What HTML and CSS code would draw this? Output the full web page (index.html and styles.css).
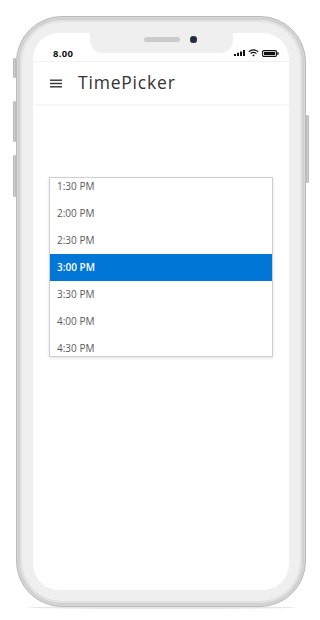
FILE: index.html
```html
<!DOCTYPE html>
<html>
<head>
<meta charset="utf-8">
<link rel="stylesheet" href="styles.css">
</head>
<body>
<div class="device">
  <span class="btn btn-l1"></span>
  <span class="btn btn-l2"></span>
  <span class="btn btn-l3"></span>
  <span class="btn btn-r1"></span>
  <div class="phone">
    <div class="bezel">
      <div class="screen">
        <div class="notch">
          <span class="speaker"></span>
          <span class="camera"></span>
        </div>
        <div class="status">
          <span class="clock">8.00</span>
          <span class="icons">
            <svg width="11" height="6" viewBox="0 0 11 6"><rect x="0" y="4" width="2" height="2" fill="#111"/><rect x="3" y="2.8" width="2" height="3.2" fill="#111"/><rect x="6" y="1.5" width="2" height="4.5" fill="#111"/><rect x="9" y="0" width="2" height="6" fill="#111"/></svg>
            <svg width="11" height="8" viewBox="0 0 11 8"><path d="M0.8 2.8 A6.5 6.5 0 0 1 10.2 2.8" fill="none" stroke="#111" stroke-width="1.2"/><path d="M2.6 4.6 A4 4 0 0 1 8.4 4.6" fill="none" stroke="#111" stroke-width="1.2"/><path d="M4.3 6.3 A1.6 1.6 0 0 1 6.7 6.3 L5.5 7.6 Z" fill="#111"/></svg>
            <svg width="17" height="7" viewBox="0 0 17 7"><rect x="0.6" y="0.6" width="14" height="5.8" rx="1.4" fill="none" stroke="#111" stroke-width="1.1"/><rect x="2" y="2" width="11.2" height="3" fill="#111"/><rect x="15.3" y="2.2" width="1.3" height="2.6" fill="#111"/></svg>
          </span>
        </div>
        <header class="appbar">
          <svg class="menu" width="12" height="9" viewBox="0 0 12 9"><rect x="0" y="0.5" width="12" height="1.4" fill="#333"/><rect x="0" y="3.8" width="12" height="1.4" fill="#333"/><rect x="0" y="7.1" width="12" height="1.4" fill="#333"/></svg>
          <span class="title">TimePicker</span>
        </header>
        <main class="content">
          <div class="popup">
            <ul class="list">
              <li class="item">1:30 PM</li>
              <li class="item">2:00 PM</li>
              <li class="item">2:30 PM</li>
              <li class="item selected">3:00 PM</li>
              <li class="item">3:30 PM</li>
              <li class="item">4:00 PM</li>
              <li class="item">4:30 PM</li>
            </ul>
          </div>
        </main>
      </div>
    </div>
  </div>
  <div class="floor"></div>
</div>
</body>
</html>
```
FILE: styles.css
```css
html, body {
  margin: 0;
  padding: 0;
  background: #ffffff;
}
body {
  width: 320px;
  height: 620px;
  overflow: hidden;
  font-family: "Open Sans", "Noto Sans", sans-serif;
}
.device {
  position: relative;
  width: 290px;
  margin: 16px 0 0 16px;
}
.btn {
  position: absolute;
  width: 3px;
  background: #cdcdcd;
  border: 1px solid #bcbcbc;
  box-sizing: border-box;
  border-radius: 1px;
}
.btn-l1 { left: -3px; top: 42px; height: 20px; }
.btn-l2 { left: -3px; top: 85px; height: 41px; }
.btn-l3 { left: -3px; top: 139px; height: 42px; }
.btn-r1 { right: -3px; top: 99px; height: 68px; }
.phone {
  position: relative;
  height: 591px;
  box-sizing: border-box;
  border-radius: 46px;
  background: #d0d0d0;
  border: 1px solid #bababa;
  padding: 3px;
  box-shadow: inset 0 0 0 1px #d9d9d9;
}
.bezel {
  height: 100%;
  box-sizing: border-box;
  border-radius: 42px;
  background: #efefef;
  padding: 13px;
  box-shadow: inset 0 0 0 2px #e2e2e2;
}
.screen {
  position: relative;
  height: 100%;
  background: #ffffff;
  border-radius: 26px;
  overflow: hidden;
  display: flex;
  flex-direction: column;
}
.notch {
  position: absolute;
  left: 57px;
  top: 0;
  width: 143px;
  height: 20px;
  background: #efefef;
  border-radius: 0 0 13px 13px;
}
.speaker {
  position: absolute;
  left: 54px;
  top: 4px;
  width: 36px;
  height: 5px;
  border-radius: 3px;
  background: #cbcbcb;
}
.camera {
  position: absolute;
  left: 100px;
  top: 3px;
  width: 7px;
  height: 7px;
  border-radius: 50%;
  background: #1b2a48;
  box-shadow: 0 0 0 1px #3a3f4a inset;
}
.status {
  height: 29px;
  flex: 0 0 29px;
  box-sizing: border-box;
  display: flex;
  align-items: center;
  justify-content: space-between;
  padding: 12px 10px 0 20px;
  border-bottom: 1px solid #f3f3f3;
}
.clock {
  font-size: 9.5px;
  font-weight: 700;
  color: #111;
  letter-spacing: 0.3px;
}
.icons {
  display: flex;
  align-items: center;
  gap: 3px;
}
.appbar {
  height: 42px;
  flex: 0 0 42px;
  display: flex;
  align-items: center;
  padding-left: 17px;
  box-shadow: 0 1px 3px rgba(0,0,0,0.06);
  position: relative;
}
.menu {
  display: block;
}
.title {
  margin-left: 16px;
  font-size: 17.5px;
  color: #333333;
  letter-spacing: 0.8px;
  line-height: 1;
}
.content {
  flex: 1;
  padding: 73px 16px 0 16px;
}
.popup {
  height: 180px;
  box-sizing: border-box;
  border: 1px solid #cfcfcf;
  box-shadow: 0 1px 3px rgba(0,0,0,0.12);
  background: #fff;
  overflow: hidden;
}
.list {
  list-style: none;
  margin: -5px 0 0 0;
  padding: 0;
}
.item {
  height: 27px;
  line-height: 27px;
  padding-left: 7px;
  font-size: 10px;
  color: #5a5a5a;
}
.item.selected {
  background: #0076d6;
  color: #ffffff;
  font-weight: 600;
}
.floor {
  margin: -1px 10px 0 12px;
  height: 3px;
  border-radius: 50%;
  background: #e6e6e6;
}
```
